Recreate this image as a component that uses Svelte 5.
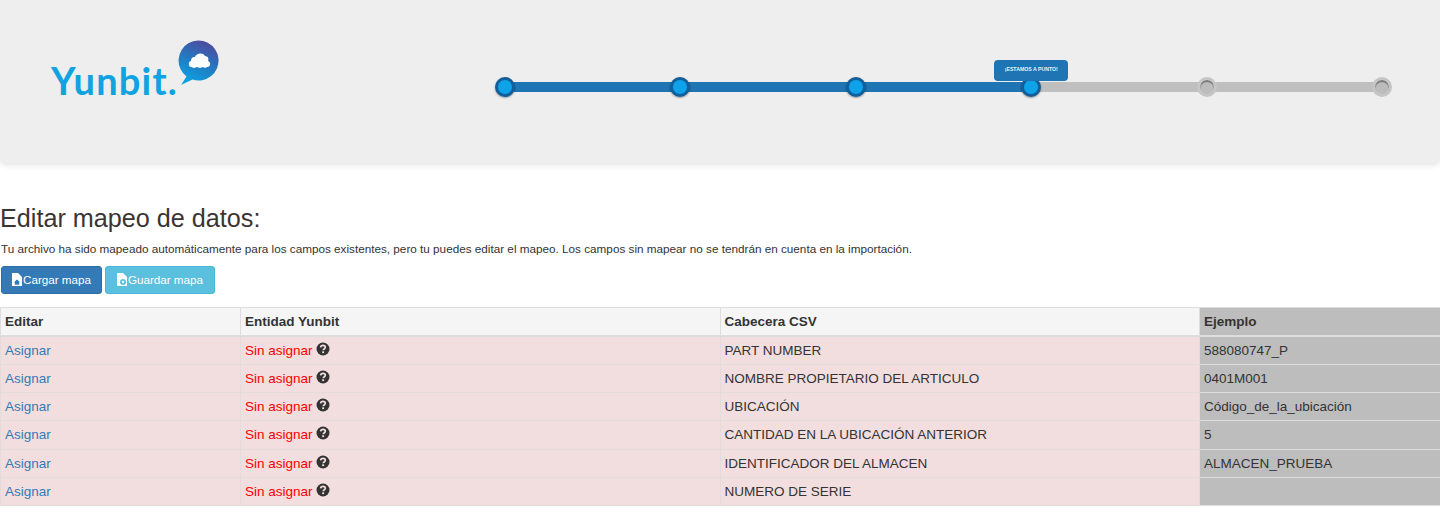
<script lang="ts">
  const steps = [
    { done: true }, { done: true }, { done: true },
    { done: true, label: '¡ESTAMOS A PUNTO!' },
    { done: false }, { done: false }
  ];
  const rows = [
    { csv: 'PART NUMBER', sample: '588080747_P' },
    { csv: 'NOMBRE PROPIETARIO DEL ARTICULO', sample: '0401M001' },
    { csv: 'UBICACIÓN', sample: 'Código_de_la_ubicación' },
    { csv: 'CANTIDAD EN LA UBICACIÓN ANTERIOR', sample: '5' },
    { csv: 'IDENTIFICADOR DEL ALMACEN', sample: 'ALMACEN_PRUEBA' },
    { csv: 'NUMERO DE SERIE', sample: '' }
  ];
</script>

<header class="top">
  <div class="logo">
    <span class="logo-text">Yunbit.</span>
    <svg class="bubble" width="48" height="52" viewBox="0 0 48 52">
      <defs>
        <linearGradient id="bub" x1="0.7" y1="0" x2="0.3" y2="1">
          <stop offset="0" stop-color="#51479b" />
          <stop offset="0.55" stop-color="#1f7fc6" />
          <stop offset="1" stop-color="#0ca5e4" />
        </linearGradient>
      </defs>
      <path d="M9 45 L20.500 39.600 A20 20 0 1 0 14.500 36.500 Z" fill="url(#bub)" />
      <path d="M19 27 C16 27 16 21 19 21 C19 17 22 17 23 17 C24 13 31 12 33 16 C36 16 37 19 36 21 C39 22 39 27 35 27 L33 28 L31 27 L28 28 L25 27 L22 28 Z" fill="#fff" />
    </svg>
  </div>
  <div class="stepper">
    {#each steps as step, i}
      {#if i > 0}
        <span class="seg" class:on={step.done}></span>
      {/if}
      <span class="dot" class:on={step.done}>
        {#if step.label}
          <span class="tip">{step.label}</span>
        {/if}
      </span>
    {/each}
  </div>
</header>

<main>
  <h3>Editar mapeo de datos:</h3>
  <p>Tu archivo ha sido mapeado automáticamente para los campos existentes, pero tu puedes editar el mapeo. Los campos sin mapear no se tendrán en cuenta en la importación.</p>
  <div class="actions">
    <button class="btn primary">
      <svg width="10" height="13" viewBox="0 0 10 13"><path d="M0 0h6l4 4v9H0z" fill="#fff" /><path d="M5 6l3.500 3.500H7.500V12h-5V9.500H1.500z" fill="#337ab7" stroke="#fff" stroke-width=".6" /></svg>Cargar mapa
    </button>
    <button class="btn info">
      <svg width="10" height="13" viewBox="0 0 10 13"><path d="M0 0h6l4 4v9H0z" fill="#fff" /><circle cx="6" cy="9" r="3" fill="#5bc0de" /><circle cx="6" cy="9" r="1.200" fill="#fff" /></svg>Guardar mapa
    </button>
  </div>

  <table>
    <colgroup>
      <col class="c1" /><col class="c2" /><col class="c3" /><col class="c4" />
    </colgroup>
    <thead>
      <tr>
        <th>Editar</th>
        <th>Entidad Yunbit</th>
        <th>Cabecera CSV</th>
        <th class="sample">Ejemplo</th>
      </tr>
    </thead>
    <tbody>
      {#each rows as row}
        <tr>
          <td><a href="#top">Asignar</a></td>
          <td>
            <span class="missing">Sin asignar</span>
            <svg class="help" width="14" height="14" viewBox="0 0 14 14">
              <circle cx="7" cy="7" r="6.500" fill="#333" />
              <path d="M4.700 5.400C4.800 4 5.800 3.300 7 3.300c1.300 0 2.300.8 2.300 1.900 0 1-.6 1.400-1.200 1.800-.5.300-.8.600-.8 1.200" fill="none" stroke="#f2dede" stroke-width="1.700" />
              <rect x="6.200" y="9.300" width="1.900" height="1.800" fill="#f2dede" />
            </svg>
          </td>
          <td>{row.csv}</td>
          <td class="sample">{row.sample}</td>
        </tr>
      {/each}
    </tbody>
  </table>
</main>

<style>
  :global(body) {
    margin: 0;
    background: #fff;
    color: #333;
    font-family: "Liberation Sans", Arial, sans-serif;
    font-size: 13.5px;
  }
  .top {
    height: 163px;
    background: #eee;
    border-radius: 0 0 6px 6px;
    box-shadow: 0 2px 6px rgba(0, 0, 0, 0.12);
    display: flex;
    align-items: flex-start;
  }
  .logo {
    width: 495px;
    flex: none;
    position: relative;
    padding: 55px 0 0 51px;
    box-sizing: border-box;
  }
  .logo-text {
    font-family: Lato, "Open Sans", sans-serif;
    font-size: 38px;
    font-weight: 700;
    line-height: 50px;
    color: #11a3df;
    letter-spacing: 1.200px;
  }
  .bubble {
    position: absolute;
    left: 172px;
    top: 40px;
  }
  .stepper {
    display: flex;
    align-items: center;
    margin-top: 77px;
    width: 897px;
  }
  .seg {
    flex: 1;
    height: 10px;
    margin: 0 -3px;
    background: #bfbfbf;
  }
  .seg.on {
    background: #1f74b4;
  }
  .dot {
    position: relative;
    z-index: 1;
    flex: none;
    width: 14px;
    height: 14px;
    border-radius: 50%;
    border: 3px solid #c6c6c6;
    background: #bcbcbc;
    box-shadow: inset 0 2px 1px #777;
  }
  .dot.on {
    border-color: #135f9c;
    background: #0ea2e8;
    box-shadow: 0 1px 2px rgba(0, 0, 0, 0.35);
  }
  .tip {
    position: absolute;
    left: 50%;
    bottom: 13px;
    transform: translateX(-50%);
    width: 74px;
    height: 21px;
    line-height: 19px;
    border-radius: 4px;
    background: #1f74b4;
    color: #e8f2fa;
    font-size: 5.200px;
    font-weight: 700;
    text-align: center;
    white-space: nowrap;
  }
  main {
    padding: 0 0 0 1px;
  }
  h3 {
    margin: 40px 0 0 -1px;
    font-size: 25.200px;
    font-weight: 400;
    line-height: 30px;
    color: #3a3533;
  }
  p {
    margin: 8px 0 0;
    font-size: 11.730px;
    line-height: 16px;
  }
  .actions {
    display: flex;
    gap: 3px;
    margin-top: 9px;
  }
  .btn {
    display: flex;
    align-items: center;
    height: 28px;
    padding: 0 10px 2px;
    border-radius: 3px;
    border: 1px solid;
    color: #fff;
    font: 11.650px "Liberation Sans", Arial, sans-serif;
  }
  .btn svg {
    margin-right: 1px;
  }
  .primary {
    background: #337ab7;
    border-color: #2e6da4;
  }
  .info {
    background: #5bc0de;
    border-color: #46b8da;
    padding: 0 11px 2px;
  }
  table {
    width: 1440px;
    margin: 13px 0 0 -1px;
    border-collapse: collapse;
    table-layout: fixed;
    line-height: 17.200px;
  }
  .c1 { width: 240px; }
  .c2 { width: 479.500px; }
  .c3 { width: 479.500px; }
  .c4 { width: 241px; }
  th, td {
    padding: 5px 4px 5px 4px;
    border: 1px solid #e4dcdc;
    text-align: left;
    background: #f2dede;
    white-space: nowrap;
  }
  th {
    background: #f5f5f5;
    border-color: #ddd;
    border-bottom-width: 2px;
    padding-bottom: 4.500px;
  }
  .sample {
    background: #bdbdbd;
    border-color: #ddd;
  }
  a {
    color: #337ab7;
    text-decoration: none;
  }
  .missing {
    color: #f00;
  }
  .help {
    vertical-align: -1px;
  }
</style>
